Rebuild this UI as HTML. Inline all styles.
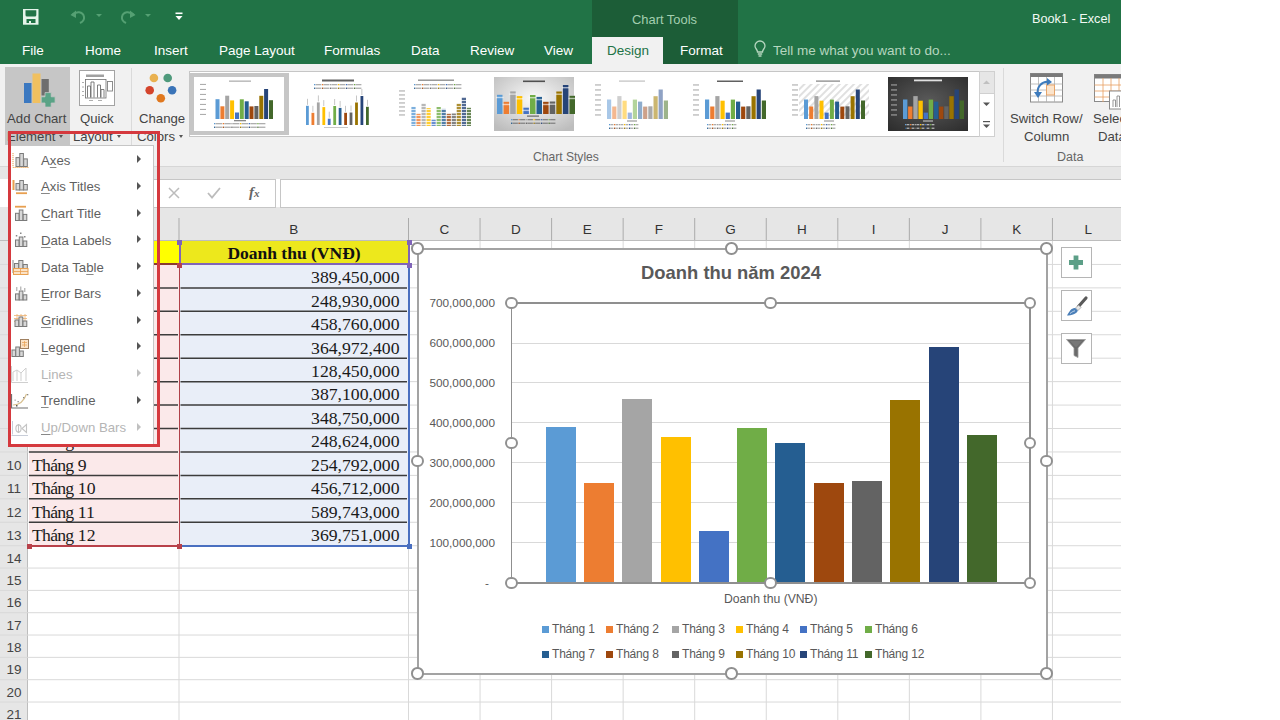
<!DOCTYPE html><html><head><meta charset="utf-8"><style>
*{margin:0;padding:0;box-sizing:border-box}
html,body{width:1280px;height:720px;overflow:hidden;background:#fff;font-family:"Liberation Sans",sans-serif}
.a{position:absolute}
svg{position:absolute;overflow:visible}
#app{position:absolute;left:0;top:0;width:1121px;height:720px;overflow:hidden;background:#fff}
.tab{position:absolute;top:42px;font-size:13.5px;color:#fff;white-space:nowrap;line-height:17px}
.rb{font-size:13.2px;color:#444;white-space:nowrap;position:absolute;line-height:15px}
.ch{position:absolute;top:218px;height:23px;font-size:13.5px;color:#333;text-align:center;line-height:24px}
.rn{position:absolute;left:0;width:28px;font-size:13.5px;color:#444;text-align:center}
.dd{display:inline-block;width:0;height:0;border-left:2.5px solid transparent;border-right:2.5px solid transparent;border-top:3px solid #555;margin-left:4px;vertical-align:3px}
.ser{font-family:"Liberation Serif",serif}
.mi{position:absolute;left:41px;font-size:13.2px;color:#5f5f5f;white-space:nowrap;line-height:16px}
.mi u{text-decoration:underline;text-decoration-thickness:1px;text-underline-offset:2px;text-decoration-color:#888}
.ar{position:absolute;left:137px;width:0;height:0;border-top:4px solid transparent;border-bottom:4px solid transparent;border-left:4px solid #555}
.lg{position:absolute;font-size:12px;letter-spacing:-0.2px;color:#595959;white-space:nowrap;line-height:14px}
.lg i{display:inline-block;width:7px;height:7px;margin-right:3px;vertical-align:0px}
.hd{position:absolute;width:12.5px;height:12.5px;border:2px solid #909090;border-radius:50%;background:#fff}
</style></head><body><div id="app">
<div class="a" style="left:0;top:0;width:1121px;height:64px;background:#217346"></div>
<div class="a" style="left:592px;top:0;width:146px;height:64px;background:#1c5d37"></div>
<div class="a" style="left:592px;top:37px;width:71px;height:27px;background:#f1f1f1"></div>
<div class="a" style="left:632px;top:12px;font-size:12.9px;color:#a3cfb0;line-height:15px">Chart Tools</div>
<div class="a" style="left:1032px;top:10.5px;font-size:12.7px;color:#f2faf4;line-height:17px">Book1 - Excel</div>
<div class="tab" style="left:22px">File</div>
<div class="tab" style="left:85px">Home</div>
<div class="tab" style="left:154px">Insert</div>
<div class="tab" style="left:219px">Page Layout</div>
<div class="tab" style="left:324px">Formulas</div>
<div class="tab" style="left:411px">Data</div>
<div class="tab" style="left:470px">Review</div>
<div class="tab" style="left:544px">View</div>
<div class="tab" style="left:680px">Format</div>
<div class="tab" style="left:607px;color:#217346">Design</div>
<div class="tab" style="left:773px;color:#b5d6bf">Tell me what you want to do...</div>
<svg style="left:22.5px;top:9px" width="16" height="16" viewBox="0 0 16 16"><rect x="0" y="0" width="15.5" height="15.7" fill="#e6f4ea"/><path d="M2.5 1.3H13.3V6.1Q13.3 7.6 11.8 7.6H4Q2.5 7.6 2.5 6.1Z" fill="#217346"/><rect x="3.5" y="10" width="9" height="4" fill="#217346"/><rect x="6" y="12" width="2" height="2" fill="#e6f4ea"/></svg>
<svg style="left:70px;top:9px" width="17" height="15" viewBox="0 0 17 15"><path d="M2 6 C6 2 13 2 14 8 C14.5 11 12 13 10 14" fill="none" stroke="#55a073" stroke-width="2"/><path d="M0.5 6 L6 1.5 L6 9Z" fill="#55a073"/></svg>
<svg style="left:96px;top:14px" width="6" height="4"><path d="M0 0H6L3 3Z" fill="#55a073"/></svg>
<svg style="left:119px;top:9px" width="17" height="15" viewBox="0 0 17 15"><path d="M15 6 C11 2 4 2 3 8 C2.5 11 5 13 7 14" fill="none" stroke="#55a073" stroke-width="2"/><path d="M16.5 6 L11 1.5 L11 9Z" fill="#55a073"/></svg>
<svg style="left:145px;top:14px" width="6" height="4"><path d="M0 0H6L3 3Z" fill="#55a073"/></svg>
<svg style="left:175px;top:12px" width="8" height="9"><rect x="0.5" y="0.5" width="7" height="1.6" fill="#fff"/><path d="M0.5 4H7.5L4 8Z" fill="#fff"/></svg>
<svg style="left:754px;top:41px" width="12" height="17" viewBox="0 0 12 17"><path d="M3.5 11 C3.5 8.5 1 7.5 1 5 A5 5 0 0 1 11 5 C11 7.5 8.5 8.5 8.5 11Z" fill="none" stroke="#b5d6bf" stroke-width="1.3"/><path d="M3.8 13H8.2M4.5 15H7.5" stroke="#b5d6bf" stroke-width="1.3"/></svg>
<div class="a" style="left:0;top:64px;width:1121px;height:103px;background:#f1f1f1"></div>
<div class="a" style="left:0;top:166px;width:1121px;height:1px;background:#d6d6d6"></div>
<div class="a" style="left:0;top:167px;width:1121px;height:12px;background:#e6e6e6"></div>
<div class="a" style="left:0;top:179px;width:1121px;height:29px;background:#fff"></div>
<div class="a" style="left:0;top:207px;width:1121px;height:34px;background:#e6e6e6"></div>
<div class="a" style="left:5px;top:67px;width:65px;height:78px;background:#c6c6c6"></div>
<svg style="left:0;top:64px" width="70" height="45"><rect x="24" y="19" width="7.5" height="20" fill="#3b78c0"/><rect x="32.5" y="9.5" width="8" height="29.5" fill="#f0c060"/><rect x="41.5" y="15" width="7.3" height="16.5" fill="#6e6e6e"/><path d="M45 28.6h6.2v4.2h3.9v6.2h-3.9v4.1h-6.2v-4.1h-3.8v-6.2h3.8z" fill="#5aa386" stroke="#c6c6c6" stroke-width="0.8"/></svg>
<div class="rb" style="left:7px;top:111px">Add Chart</div>
<div class="rb" style="left:7px;top:129px">Element<i class="dd"></i></div>
<svg style="left:79px;top:70px" width="37" height="37"><rect x="0.5" y="0.5" width="35" height="35" fill="#fff" stroke="#a3a3a3"/><rect x="7" y="4.5" width="18" height="2.5" fill="#a0a0a0"/><rect x="6.5" y="9.5" width="20.5" height="18.5" fill="none" stroke="#707070" stroke-width="0.8"/><path d="M8.5 27.5V16H11.5V27.5M12 27.5V12H15V27.5M18.5 27.5V15H21.5V27.5M22 27.5V19.5H25V27.5" fill="none" stroke="#707070" stroke-width="0.9"/><rect x="28.5" y="11.5" width="5" height="9.5" fill="none" stroke="#808080" stroke-width="0.9"/><path d="M3 12.5h2M3 17h2M3 21.5h2M3 25.5h2M10 30.5h4M19 30.5h4" stroke="#9a9a9a" stroke-width="0.8"/></svg>
<div class="rb" style="left:80px;top:111px">Quick</div>
<div class="rb" style="left:73px;top:129px">Layout<i class="dd"></i></div>
<div class="a" style="left:131px;top:68px;width:1px;height:94px;background:#dadada"></div>
<svg style="left:140px;top:64px" width="40" height="40"><circle cx="13.9" cy="14" r="4.3" fill="#e9b150"/><circle cx="27.7" cy="14" r="4.3" fill="#4f9a7c"/><circle cx="9.7" cy="26.2" r="4.3" fill="#d4442c"/><circle cx="32.1" cy="26.2" r="4.3" fill="#3b74b8"/><circle cx="20.8" cy="34.2" r="4.3" fill="#e0781f"/></svg>
<div class="rb" style="left:139px;top:111px">Change</div>
<div class="rb" style="left:137px;top:129px">Colors<i class="dd"></i></div>
<div class="rb" style="left:533px;top:150px;font-size:12.1px;color:#666">Chart Styles</div>
<div class="a" style="left:1003px;top:68px;width:1px;height:94px;background:#dadada"></div>
<div class="a" style="left:189px;top:70.5px;width:791px;height:66px;background:#fff;border:1px solid #c6c6c6"></div>
<div class="a" style="left:189.5px;top:72.8px;width:99px;height:62px;background:#c6c6c6"></div>
<svg style="left:194px;top:77px;filter:blur(0.35px)" width="90" height="54" viewBox="0 0 90 54"><rect width="90" height="54" fill="#fff"/><rect x="35" y="3.5" width="22" height="1.3" fill="#b0b0b0"/><rect x="6" y="6.9" width="6" height="1.1" fill="#8a8a8a" opacity="0.7"/><rect x="6" y="11.9" width="6" height="1.1" fill="#8a8a8a" opacity="0.7"/><rect x="6" y="16.9" width="6" height="1.1" fill="#8a8a8a" opacity="0.7"/><rect x="6" y="21.9" width="6" height="1.1" fill="#8a8a8a" opacity="0.7"/><rect x="6" y="26.9" width="6" height="1.1" fill="#8a8a8a" opacity="0.7"/><rect x="6" y="31.9" width="6" height="1.1" fill="#8a8a8a" opacity="0.7"/><rect x="6" y="36.9" width="6" height="1.1" fill="#8a8a8a" opacity="0.7"/><rect x="21.5" y="22.2" width="4" height="19.8" fill="#5b9bd5"/><rect x="26.4" y="29.3" width="4" height="12.7" fill="#ed7d31"/><rect x="31.2" y="18.7" width="4" height="23.3" fill="#a5a5a5"/><rect x="36.1" y="23.4" width="4" height="18.6" fill="#ffc000"/><rect x="41.0" y="35.5" width="4" height="6.5" fill="#4472c4"/><rect x="45.8" y="22.3" width="4" height="19.7" fill="#70ad47"/><rect x="50.7" y="24.3" width="4" height="17.7" fill="#255e91"/><rect x="55.5" y="29.4" width="4" height="12.6" fill="#9e480e"/><rect x="60.4" y="29.0" width="4" height="13.0" fill="#636363"/><rect x="65.3" y="18.8" width="4" height="23.2" fill="#997300"/><rect x="70.1" y="12.0" width="4" height="30.0" fill="#264478"/><rect x="75.0" y="23.2" width="4" height="18.8" fill="#43682b"/><rect x="40" y="43" width="12" height="1.3" fill="#888"/><rect x="20.0" y="46.0" width="1.3" height="1.3" fill="#5b9bd5"/><rect x="21.6" y="46.0" width="6.5" height="1.3" fill="#9a9a9a" opacity="0.8"/><rect x="28.7" y="46.0" width="1.3" height="1.3" fill="#ed7d31"/><rect x="30.3" y="46.0" width="6.5" height="1.3" fill="#9a9a9a" opacity="0.8"/><rect x="37.3" y="46.0" width="1.3" height="1.3" fill="#a5a5a5"/><rect x="38.9" y="46.0" width="6.5" height="1.3" fill="#9a9a9a" opacity="0.8"/><rect x="46.0" y="46.0" width="1.3" height="1.3" fill="#ffc000"/><rect x="47.6" y="46.0" width="6.5" height="1.3" fill="#9a9a9a" opacity="0.8"/><rect x="54.7" y="46.0" width="1.3" height="1.3" fill="#4472c4"/><rect x="56.3" y="46.0" width="6.5" height="1.3" fill="#9a9a9a" opacity="0.8"/><rect x="63.3" y="46.0" width="1.3" height="1.3" fill="#70ad47"/><rect x="64.9" y="46.0" width="6.5" height="1.3" fill="#9a9a9a" opacity="0.8"/><rect x="20.0" y="49.6" width="1.3" height="1.3" fill="#255e91"/><rect x="21.6" y="49.6" width="6.5" height="1.3" fill="#9a9a9a" opacity="0.8"/><rect x="28.7" y="49.6" width="1.3" height="1.3" fill="#9e480e"/><rect x="30.3" y="49.6" width="6.5" height="1.3" fill="#9a9a9a" opacity="0.8"/><rect x="37.3" y="49.6" width="1.3" height="1.3" fill="#636363"/><rect x="38.9" y="49.6" width="6.5" height="1.3" fill="#9a9a9a" opacity="0.8"/><rect x="46.0" y="49.6" width="1.3" height="1.3" fill="#997300"/><rect x="47.6" y="49.6" width="6.5" height="1.3" fill="#9a9a9a" opacity="0.8"/><rect x="54.7" y="49.6" width="1.3" height="1.3" fill="#264478"/><rect x="56.3" y="49.6" width="6.5" height="1.3" fill="#9a9a9a" opacity="0.8"/><rect x="63.3" y="49.6" width="1.3" height="1.3" fill="#43682b"/><rect x="64.9" y="49.6" width="6.5" height="1.3" fill="#9a9a9a" opacity="0.8"/></svg>
<svg style="left:297.6px;top:77px;filter:blur(0.35px)" width="80" height="54" viewBox="0 0 80 54"><rect width="80" height="54" fill="#fff"/><rect x="24" y="2.5" width="32" height="2" fill="#606060"/><rect x="16.0" y="7.0" width="1.3" height="1.3" fill="#5b9bd5"/><rect x="17.6" y="7.0" width="5.8" height="1.3" fill="#9a9a9a" opacity="0.8"/><rect x="24.0" y="7.0" width="1.3" height="1.3" fill="#ed7d31"/><rect x="25.6" y="7.0" width="5.8" height="1.3" fill="#9a9a9a" opacity="0.8"/><rect x="32.0" y="7.0" width="1.3" height="1.3" fill="#a5a5a5"/><rect x="33.6" y="7.0" width="5.8" height="1.3" fill="#9a9a9a" opacity="0.8"/><rect x="40.0" y="7.0" width="1.3" height="1.3" fill="#ffc000"/><rect x="41.6" y="7.0" width="5.8" height="1.3" fill="#9a9a9a" opacity="0.8"/><rect x="48.0" y="7.0" width="1.3" height="1.3" fill="#4472c4"/><rect x="49.6" y="7.0" width="5.8" height="1.3" fill="#9a9a9a" opacity="0.8"/><rect x="56.0" y="7.0" width="1.3" height="1.3" fill="#70ad47"/><rect x="57.6" y="7.0" width="5.8" height="1.3" fill="#9a9a9a" opacity="0.8"/><rect x="16.0" y="10.6" width="1.3" height="1.3" fill="#255e91"/><rect x="17.6" y="10.6" width="5.8" height="1.3" fill="#9a9a9a" opacity="0.8"/><rect x="24.0" y="10.6" width="1.3" height="1.3" fill="#9e480e"/><rect x="25.6" y="10.6" width="5.8" height="1.3" fill="#9a9a9a" opacity="0.8"/><rect x="32.0" y="10.6" width="1.3" height="1.3" fill="#636363"/><rect x="33.6" y="10.6" width="5.8" height="1.3" fill="#9a9a9a" opacity="0.8"/><rect x="40.0" y="10.6" width="1.3" height="1.3" fill="#997300"/><rect x="41.6" y="10.6" width="5.8" height="1.3" fill="#9a9a9a" opacity="0.8"/><rect x="48.0" y="10.6" width="1.3" height="1.3" fill="#264478"/><rect x="49.6" y="10.6" width="5.8" height="1.3" fill="#9a9a9a" opacity="0.8"/><rect x="56.0" y="10.6" width="1.3" height="1.3" fill="#43682b"/><rect x="57.6" y="10.6" width="5.8" height="1.3" fill="#9a9a9a" opacity="0.8"/><rect x="8.0" y="28.8" width="2.8" height="19.2" fill="#5b9bd5"/><rect x="9.0" y="21.8" width="0.8" height="6" fill="#b8b8b8"/><rect x="13.5" y="35.8" width="2.8" height="12.2" fill="#ed7d31"/><rect x="14.5" y="28.8" width="0.8" height="6" fill="#b8b8b8"/><rect x="18.9" y="25.4" width="2.8" height="22.6" fill="#a5a5a5"/><rect x="19.9" y="18.4" width="0.8" height="6" fill="#b8b8b8"/><rect x="24.4" y="30.1" width="2.8" height="17.9" fill="#ffc000"/><rect x="25.4" y="23.1" width="0.8" height="6" fill="#b8b8b8"/><rect x="29.8" y="41.7" width="2.8" height="6.3" fill="#4472c4"/><rect x="30.8" y="34.7" width="0.8" height="6" fill="#b8b8b8"/><rect x="35.3" y="29.0" width="2.8" height="19.0" fill="#70ad47"/><rect x="36.3" y="22.0" width="0.8" height="6" fill="#b8b8b8"/><rect x="40.7" y="30.9" width="2.8" height="17.1" fill="#255e91"/><rect x="41.7" y="23.9" width="0.8" height="6" fill="#b8b8b8"/><rect x="46.2" y="35.8" width="2.8" height="12.2" fill="#9e480e"/><rect x="47.2" y="28.8" width="0.8" height="6" fill="#b8b8b8"/><rect x="51.6" y="35.5" width="2.8" height="12.5" fill="#636363"/><rect x="52.6" y="28.5" width="0.8" height="6" fill="#b8b8b8"/><rect x="57.1" y="25.5" width="2.8" height="22.5" fill="#997300"/><rect x="58.1" y="18.5" width="0.8" height="6" fill="#b8b8b8"/><rect x="62.5" y="19.0" width="2.8" height="29.0" fill="#264478"/><rect x="63.5" y="12.0" width="0.8" height="6" fill="#b8b8b8"/><rect x="68.0" y="29.8" width="2.8" height="18.2" fill="#43682b"/><rect x="69.0" y="22.8" width="0.8" height="6" fill="#b8b8b8"/><rect x="26" y="50" width="24" height="1" fill="#c8c8c8"/></svg>
<svg style="left:395.6px;top:77px;filter:blur(0.35px)" width="80" height="54" viewBox="0 0 80 54"><rect width="80" height="54" fill="#fff"/><rect x="22" y="2.5" width="36" height="1.4" fill="#909090"/><rect x="18.0" y="7.0" width="1.3" height="1.3" fill="#5b9bd5"/><rect x="19.6" y="7.0" width="5.8" height="1.3" fill="#9a9a9a" opacity="0.8"/><rect x="26.0" y="7.0" width="1.3" height="1.3" fill="#ed7d31"/><rect x="27.6" y="7.0" width="5.8" height="1.3" fill="#9a9a9a" opacity="0.8"/><rect x="34.0" y="7.0" width="1.3" height="1.3" fill="#a5a5a5"/><rect x="35.6" y="7.0" width="5.8" height="1.3" fill="#9a9a9a" opacity="0.8"/><rect x="42.0" y="7.0" width="1.3" height="1.3" fill="#ffc000"/><rect x="43.6" y="7.0" width="5.8" height="1.3" fill="#9a9a9a" opacity="0.8"/><rect x="50.0" y="7.0" width="1.3" height="1.3" fill="#4472c4"/><rect x="51.6" y="7.0" width="5.8" height="1.3" fill="#9a9a9a" opacity="0.8"/><rect x="58.0" y="7.0" width="1.3" height="1.3" fill="#70ad47"/><rect x="59.6" y="7.0" width="5.8" height="1.3" fill="#9a9a9a" opacity="0.8"/><rect x="18.0" y="10.6" width="1.3" height="1.3" fill="#255e91"/><rect x="19.6" y="10.6" width="5.8" height="1.3" fill="#9a9a9a" opacity="0.8"/><rect x="26.0" y="10.6" width="1.3" height="1.3" fill="#9e480e"/><rect x="27.6" y="10.6" width="5.8" height="1.3" fill="#9a9a9a" opacity="0.8"/><rect x="34.0" y="10.6" width="1.3" height="1.3" fill="#636363"/><rect x="35.6" y="10.6" width="5.8" height="1.3" fill="#9a9a9a" opacity="0.8"/><rect x="42.0" y="10.6" width="1.3" height="1.3" fill="#997300"/><rect x="43.6" y="10.6" width="5.8" height="1.3" fill="#9a9a9a" opacity="0.8"/><rect x="50.0" y="10.6" width="1.3" height="1.3" fill="#264478"/><rect x="51.6" y="10.6" width="5.8" height="1.3" fill="#9a9a9a" opacity="0.8"/><rect x="58.0" y="10.6" width="1.3" height="1.3" fill="#43682b"/><rect x="59.6" y="10.6" width="5.8" height="1.3" fill="#9a9a9a" opacity="0.8"/><rect x="3" y="13.4" width="6" height="1.1" fill="#8a8a8a" opacity="0.7"/><rect x="3" y="17.4" width="6" height="1.1" fill="#8a8a8a" opacity="0.7"/><rect x="3" y="21.4" width="6" height="1.1" fill="#8a8a8a" opacity="0.7"/><rect x="3" y="25.4" width="6" height="1.1" fill="#8a8a8a" opacity="0.7"/><rect x="3" y="29.4" width="6" height="1.1" fill="#8a8a8a" opacity="0.7"/><rect x="3" y="33.4" width="6" height="1.1" fill="#8a8a8a" opacity="0.7"/><rect x="3" y="37.4" width="6" height="1.1" fill="#8a8a8a" opacity="0.7"/><rect x="15.4" y="29.8" width="4.2" height="19.2" fill="#5b9bd5" opacity="0.8"/><rect x="20.4" y="36.8" width="4.2" height="12.2" fill="#ed7d31" opacity="0.8"/><rect x="25.5" y="26.4" width="4.2" height="22.6" fill="#a5a5a5" opacity="0.8"/><rect x="30.5" y="31.1" width="4.2" height="17.9" fill="#ffc000" opacity="0.8"/><rect x="35.5" y="42.7" width="4.2" height="6.3" fill="#4472c4" opacity="0.8"/><rect x="40.6" y="30.0" width="4.2" height="19.0" fill="#70ad47" opacity="0.8"/><rect x="45.6" y="31.9" width="4.2" height="17.1" fill="#255e91" opacity="0.8"/><rect x="50.7" y="36.8" width="4.2" height="12.2" fill="#9e480e" opacity="0.8"/><rect x="55.7" y="36.5" width="4.2" height="12.5" fill="#636363" opacity="0.8"/><rect x="60.7" y="26.5" width="4.2" height="22.5" fill="#997300" opacity="0.8"/><rect x="65.8" y="20.0" width="4.2" height="29.0" fill="#264478" opacity="0.8"/><rect x="70.8" y="30.8" width="4.2" height="18.2" fill="#43682b" opacity="0.8"/><rect x="12" y="14" width="68" height="1" fill="#fff" opacity="0.75"/><rect x="12" y="17" width="68" height="1" fill="#fff" opacity="0.75"/><rect x="12" y="20" width="68" height="1" fill="#fff" opacity="0.75"/><rect x="12" y="23" width="68" height="1" fill="#fff" opacity="0.75"/><rect x="12" y="26" width="68" height="1" fill="#fff" opacity="0.75"/><rect x="12" y="29" width="68" height="1" fill="#fff" opacity="0.75"/><rect x="12" y="32" width="68" height="1" fill="#fff" opacity="0.75"/><rect x="12" y="35" width="68" height="1" fill="#fff" opacity="0.75"/><rect x="12" y="38" width="68" height="1" fill="#fff" opacity="0.75"/><rect x="12" y="41" width="68" height="1" fill="#fff" opacity="0.75"/><rect x="12" y="44" width="68" height="1" fill="#fff" opacity="0.75"/><rect x="12" y="47" width="68" height="1" fill="#fff" opacity="0.75"/></svg>
<svg style="left:494.3px;top:77px;filter:blur(0.35px)" width="80" height="54" viewBox="0 0 80 54"><defs><radialGradient id="g4" cx="0.5" cy="0.4" r="0.7"><stop offset="0" stop-color="#fafafa"/><stop offset="1" stop-color="#bdbdbd"/></radialGradient></defs><rect width="80" height="54" fill="url(#g4)"/><rect x="29" y="3.5" width="22" height="1.6" fill="#505050"/><rect x="3.0" y="17.8" width="5.5" height="19.2" fill="#5b9bd5"/><rect x="2.0" y="19.8" width="7.5" height="1.4" fill="#fff" opacity="0.6"/><rect x="9.6" y="24.8" width="5.5" height="12.2" fill="#ed7d31"/><rect x="8.6" y="26.8" width="7.5" height="1.4" fill="#fff" opacity="0.6"/><rect x="16.2" y="14.4" width="5.5" height="22.6" fill="#a5a5a5"/><rect x="15.2" y="16.4" width="7.5" height="1.4" fill="#fff" opacity="0.6"/><rect x="22.8" y="19.1" width="5.5" height="17.9" fill="#ffc000"/><rect x="21.8" y="21.1" width="7.5" height="1.4" fill="#fff" opacity="0.6"/><rect x="29.4" y="30.7" width="5.5" height="6.3" fill="#4472c4"/><rect x="28.4" y="32.7" width="7.5" height="1.4" fill="#fff" opacity="0.6"/><rect x="36.0" y="18.0" width="5.5" height="19.0" fill="#70ad47"/><rect x="35.0" y="20.0" width="7.5" height="1.4" fill="#fff" opacity="0.6"/><rect x="42.5" y="19.9" width="5.5" height="17.1" fill="#255e91"/><rect x="41.5" y="21.9" width="7.5" height="1.4" fill="#fff" opacity="0.6"/><rect x="49.1" y="24.8" width="5.5" height="12.2" fill="#9e480e"/><rect x="48.1" y="26.8" width="7.5" height="1.4" fill="#fff" opacity="0.6"/><rect x="55.7" y="24.5" width="5.5" height="12.5" fill="#636363"/><rect x="54.7" y="26.5" width="7.5" height="1.4" fill="#fff" opacity="0.6"/><rect x="62.3" y="14.5" width="5.5" height="22.5" fill="#997300"/><rect x="61.3" y="16.5" width="7.5" height="1.4" fill="#fff" opacity="0.6"/><rect x="68.9" y="8.0" width="5.5" height="29.0" fill="#264478"/><rect x="67.9" y="10.0" width="7.5" height="1.4" fill="#fff" opacity="0.6"/><rect x="75.5" y="18.8" width="5.5" height="18.2" fill="#43682b"/><rect x="74.5" y="20.8" width="7.5" height="1.4" fill="#fff" opacity="0.6"/><rect x="33" y="38.5" width="12" height="1.2" fill="#666"/><rect x="17.0" y="42.0" width="1.3" height="1.3" fill="#5b9bd5"/><rect x="18.6" y="42.0" width="5.3" height="1.3" fill="#707070" opacity="0.8"/><rect x="24.5" y="42.0" width="1.3" height="1.3" fill="#ed7d31"/><rect x="26.1" y="42.0" width="5.3" height="1.3" fill="#707070" opacity="0.8"/><rect x="32.0" y="42.0" width="1.3" height="1.3" fill="#a5a5a5"/><rect x="33.6" y="42.0" width="5.3" height="1.3" fill="#707070" opacity="0.8"/><rect x="39.5" y="42.0" width="1.3" height="1.3" fill="#ffc000"/><rect x="41.1" y="42.0" width="5.3" height="1.3" fill="#707070" opacity="0.8"/><rect x="47.0" y="42.0" width="1.3" height="1.3" fill="#4472c4"/><rect x="48.6" y="42.0" width="5.3" height="1.3" fill="#707070" opacity="0.8"/><rect x="54.5" y="42.0" width="1.3" height="1.3" fill="#70ad47"/><rect x="56.1" y="42.0" width="5.3" height="1.3" fill="#707070" opacity="0.8"/><rect x="17.0" y="45.6" width="1.3" height="1.3" fill="#255e91"/><rect x="18.6" y="45.6" width="5.3" height="1.3" fill="#707070" opacity="0.8"/><rect x="24.5" y="45.6" width="1.3" height="1.3" fill="#9e480e"/><rect x="26.1" y="45.6" width="5.3" height="1.3" fill="#707070" opacity="0.8"/><rect x="32.0" y="45.6" width="1.3" height="1.3" fill="#636363"/><rect x="33.6" y="45.6" width="5.3" height="1.3" fill="#707070" opacity="0.8"/><rect x="39.5" y="45.6" width="1.3" height="1.3" fill="#997300"/><rect x="41.1" y="45.6" width="5.3" height="1.3" fill="#707070" opacity="0.8"/><rect x="47.0" y="45.6" width="1.3" height="1.3" fill="#264478"/><rect x="48.6" y="45.6" width="5.3" height="1.3" fill="#707070" opacity="0.8"/><rect x="54.5" y="45.6" width="1.3" height="1.3" fill="#43682b"/><rect x="56.1" y="45.6" width="5.3" height="1.3" fill="#707070" opacity="0.8"/></svg>
<svg style="left:592.4px;top:77px;filter:blur(0.35px)" width="80" height="54" viewBox="0 0 80 54"><rect width="80" height="54" fill="#fff"/><rect x="27" y="3.5" width="26" height="1.2" fill="#c0c0c0"/><rect x="3" y="7.4" width="6" height="1.1" fill="#8a8a8a" opacity="0.7"/><rect x="3" y="12.4" width="6" height="1.1" fill="#8a8a8a" opacity="0.7"/><rect x="3" y="17.4" width="6" height="1.1" fill="#8a8a8a" opacity="0.7"/><rect x="3" y="22.4" width="6" height="1.1" fill="#8a8a8a" opacity="0.7"/><rect x="3" y="27.4" width="6" height="1.1" fill="#8a8a8a" opacity="0.7"/><rect x="3" y="32.4" width="6" height="1.1" fill="#8a8a8a" opacity="0.7"/><rect x="3" y="37.4" width="6" height="1.1" fill="#8a8a8a" opacity="0.7"/><rect x="15.0" y="22.5" width="4.2" height="19.5" fill="#a9c8e8"/><rect x="20.2" y="29.5" width="4.2" height="12.5" fill="#f4b890"/><rect x="25.3" y="19.1" width="4.2" height="22.9" fill="#cfcfcf"/><rect x="30.5" y="23.7" width="4.2" height="18.3" fill="#ffdc80"/><rect x="35.7" y="35.6" width="4.2" height="6.4" fill="#9fb6e0"/><rect x="40.8" y="22.6" width="4.2" height="19.4" fill="#b3d49b"/><rect x="46.0" y="24.6" width="4.2" height="17.4" fill="#8eaccc"/><rect x="51.1" y="29.6" width="4.2" height="12.4" fill="#cda18a"/><rect x="56.3" y="29.3" width="4.2" height="12.7" fill="#aaaaaa"/><rect x="61.5" y="19.2" width="4.2" height="22.8" fill="#cbb670"/><rect x="66.6" y="12.5" width="4.2" height="29.5" fill="#8fa2c4"/><rect x="71.8" y="23.5" width="4.2" height="18.5" fill="#9db48b"/><rect x="35" y="43.5" width="10" height="1" fill="#888"/><rect x="17.0" y="47.0" width="1.3" height="1.3" fill="#5b9bd5"/><rect x="18.6" y="47.0" width="2.8" height="1.3" fill="#9a9a9a" opacity="0.8"/><rect x="22.0" y="47.0" width="1.3" height="1.3" fill="#ed7d31"/><rect x="23.6" y="47.0" width="2.8" height="1.3" fill="#9a9a9a" opacity="0.8"/><rect x="27.0" y="47.0" width="1.3" height="1.3" fill="#a5a5a5"/><rect x="28.6" y="47.0" width="2.8" height="1.3" fill="#9a9a9a" opacity="0.8"/><rect x="32.0" y="47.0" width="1.3" height="1.3" fill="#ffc000"/><rect x="33.6" y="47.0" width="2.8" height="1.3" fill="#9a9a9a" opacity="0.8"/><rect x="37.0" y="47.0" width="1.3" height="1.3" fill="#4472c4"/><rect x="38.6" y="47.0" width="2.8" height="1.3" fill="#9a9a9a" opacity="0.8"/><rect x="42.0" y="47.0" width="1.3" height="1.3" fill="#70ad47"/><rect x="43.6" y="47.0" width="2.8" height="1.3" fill="#9a9a9a" opacity="0.8"/><rect x="17.0" y="50.6" width="1.3" height="1.3" fill="#255e91"/><rect x="18.6" y="50.6" width="2.8" height="1.3" fill="#9a9a9a" opacity="0.8"/><rect x="22.0" y="50.6" width="1.3" height="1.3" fill="#9e480e"/><rect x="23.6" y="50.6" width="2.8" height="1.3" fill="#9a9a9a" opacity="0.8"/><rect x="27.0" y="50.6" width="1.3" height="1.3" fill="#636363"/><rect x="28.6" y="50.6" width="2.8" height="1.3" fill="#9a9a9a" opacity="0.8"/><rect x="32.0" y="50.6" width="1.3" height="1.3" fill="#997300"/><rect x="33.6" y="50.6" width="2.8" height="1.3" fill="#9a9a9a" opacity="0.8"/><rect x="37.0" y="50.6" width="1.3" height="1.3" fill="#264478"/><rect x="38.6" y="50.6" width="2.8" height="1.3" fill="#9a9a9a" opacity="0.8"/><rect x="42.0" y="50.6" width="1.3" height="1.3" fill="#43682b"/><rect x="43.6" y="50.6" width="2.8" height="1.3" fill="#9a9a9a" opacity="0.8"/></svg>
<svg style="left:690.4px;top:77px;filter:blur(0.35px)" width="80" height="54" viewBox="0 0 80 54"><rect width="80" height="54" fill="#fff"/><rect x="27" y="3.5" width="26" height="1.5" fill="#606060"/><rect x="3" y="7.4" width="6" height="1.1" fill="#8a8a8a" opacity="0.7"/><rect x="3" y="12.4" width="6" height="1.1" fill="#8a8a8a" opacity="0.7"/><rect x="3" y="17.4" width="6" height="1.1" fill="#8a8a8a" opacity="0.7"/><rect x="3" y="22.4" width="6" height="1.1" fill="#8a8a8a" opacity="0.7"/><rect x="3" y="27.4" width="6" height="1.1" fill="#8a8a8a" opacity="0.7"/><rect x="3" y="32.4" width="6" height="1.1" fill="#8a8a8a" opacity="0.7"/><rect x="3" y="37.4" width="6" height="1.1" fill="#8a8a8a" opacity="0.7"/><rect x="15.0" y="22.5" width="4.2" height="19.5" fill="#5b9bd5"/><rect x="20.2" y="29.5" width="4.2" height="12.5" fill="#ed7d31"/><rect x="25.3" y="19.1" width="4.2" height="22.9" fill="#a5a5a5"/><rect x="30.5" y="23.7" width="4.2" height="18.3" fill="#ffc000"/><rect x="35.7" y="35.6" width="4.2" height="6.4" fill="#4472c4"/><rect x="40.8" y="22.6" width="4.2" height="19.4" fill="#70ad47"/><rect x="46.0" y="24.6" width="4.2" height="17.4" fill="#255e91"/><rect x="51.1" y="29.6" width="4.2" height="12.4" fill="#9e480e"/><rect x="56.3" y="29.3" width="4.2" height="12.7" fill="#636363"/><rect x="61.5" y="19.2" width="4.2" height="22.8" fill="#997300"/><rect x="66.6" y="12.5" width="4.2" height="29.5" fill="#264478"/><rect x="71.8" y="23.5" width="4.2" height="18.5" fill="#43682b"/><rect x="35" y="43.5" width="10" height="1" fill="#888"/><rect x="17.0" y="47.0" width="1.3" height="1.3" fill="#5b9bd5"/><rect x="18.6" y="47.0" width="2.8" height="1.3" fill="#9a9a9a" opacity="0.8"/><rect x="22.0" y="47.0" width="1.3" height="1.3" fill="#ed7d31"/><rect x="23.6" y="47.0" width="2.8" height="1.3" fill="#9a9a9a" opacity="0.8"/><rect x="27.0" y="47.0" width="1.3" height="1.3" fill="#a5a5a5"/><rect x="28.6" y="47.0" width="2.8" height="1.3" fill="#9a9a9a" opacity="0.8"/><rect x="32.0" y="47.0" width="1.3" height="1.3" fill="#ffc000"/><rect x="33.6" y="47.0" width="2.8" height="1.3" fill="#9a9a9a" opacity="0.8"/><rect x="37.0" y="47.0" width="1.3" height="1.3" fill="#4472c4"/><rect x="38.6" y="47.0" width="2.8" height="1.3" fill="#9a9a9a" opacity="0.8"/><rect x="42.0" y="47.0" width="1.3" height="1.3" fill="#70ad47"/><rect x="43.6" y="47.0" width="2.8" height="1.3" fill="#9a9a9a" opacity="0.8"/><rect x="17.0" y="50.6" width="1.3" height="1.3" fill="#255e91"/><rect x="18.6" y="50.6" width="2.8" height="1.3" fill="#9a9a9a" opacity="0.8"/><rect x="22.0" y="50.6" width="1.3" height="1.3" fill="#9e480e"/><rect x="23.6" y="50.6" width="2.8" height="1.3" fill="#9a9a9a" opacity="0.8"/><rect x="27.0" y="50.6" width="1.3" height="1.3" fill="#636363"/><rect x="28.6" y="50.6" width="2.8" height="1.3" fill="#9a9a9a" opacity="0.8"/><rect x="32.0" y="50.6" width="1.3" height="1.3" fill="#997300"/><rect x="33.6" y="50.6" width="2.8" height="1.3" fill="#9a9a9a" opacity="0.8"/><rect x="37.0" y="50.6" width="1.3" height="1.3" fill="#264478"/><rect x="38.6" y="50.6" width="2.8" height="1.3" fill="#9a9a9a" opacity="0.8"/><rect x="42.0" y="50.6" width="1.3" height="1.3" fill="#43682b"/><rect x="43.6" y="50.6" width="2.8" height="1.3" fill="#9a9a9a" opacity="0.8"/></svg>
<svg style="left:788.5px;top:77px;filter:blur(0.35px)" width="80" height="54" viewBox="0 0 80 54"><rect width="80" height="54" fill="#fff"/><defs><pattern id="p7" width="5" height="5" patternUnits="userSpaceOnUse" patternTransform="rotate(45)"><rect width="2" height="5" fill="#e0e0e0"/></pattern></defs><rect x="10" y="7" width="70" height="32" fill="url(#p7)"/><rect x="27" y="3.5" width="24" height="1.2" fill="#808080"/><rect x="3" y="7.4" width="6" height="1.1" fill="#8a8a8a" opacity="0.7"/><rect x="3" y="12.4" width="6" height="1.1" fill="#8a8a8a" opacity="0.7"/><rect x="3" y="17.4" width="6" height="1.1" fill="#8a8a8a" opacity="0.7"/><rect x="3" y="22.4" width="6" height="1.1" fill="#8a8a8a" opacity="0.7"/><rect x="3" y="27.4" width="6" height="1.1" fill="#8a8a8a" opacity="0.7"/><rect x="3" y="32.4" width="6" height="1.1" fill="#8a8a8a" opacity="0.7"/><rect x="3" y="37.4" width="6" height="1.1" fill="#8a8a8a" opacity="0.7"/><rect x="15.0" y="22.5" width="4" height="19.5" fill="#5b9bd5"/><rect x="20.2" y="29.5" width="4" height="12.5" fill="#ed7d31"/><rect x="25.4" y="19.1" width="4" height="22.9" fill="#a5a5a5"/><rect x="30.5" y="23.7" width="4" height="18.3" fill="#ffc000"/><rect x="35.7" y="35.6" width="4" height="6.4" fill="#4472c4"/><rect x="40.9" y="22.6" width="4" height="19.4" fill="#70ad47"/><rect x="46.1" y="24.6" width="4" height="17.4" fill="#255e91"/><rect x="51.3" y="29.6" width="4" height="12.4" fill="#9e480e"/><rect x="56.5" y="29.3" width="4" height="12.7" fill="#636363"/><rect x="61.6" y="19.2" width="4" height="22.8" fill="#997300"/><rect x="66.8" y="12.5" width="4" height="29.5" fill="#264478"/><rect x="72.0" y="23.5" width="4" height="18.5" fill="#43682b"/><rect x="35" y="43.5" width="10" height="1" fill="#888"/><rect x="17.0" y="47.0" width="1.3" height="1.3" fill="#5b9bd5"/><rect x="18.6" y="47.0" width="2.8" height="1.3" fill="#9a9a9a" opacity="0.8"/><rect x="22.0" y="47.0" width="1.3" height="1.3" fill="#ed7d31"/><rect x="23.6" y="47.0" width="2.8" height="1.3" fill="#9a9a9a" opacity="0.8"/><rect x="27.0" y="47.0" width="1.3" height="1.3" fill="#a5a5a5"/><rect x="28.6" y="47.0" width="2.8" height="1.3" fill="#9a9a9a" opacity="0.8"/><rect x="32.0" y="47.0" width="1.3" height="1.3" fill="#ffc000"/><rect x="33.6" y="47.0" width="2.8" height="1.3" fill="#9a9a9a" opacity="0.8"/><rect x="37.0" y="47.0" width="1.3" height="1.3" fill="#4472c4"/><rect x="38.6" y="47.0" width="2.8" height="1.3" fill="#9a9a9a" opacity="0.8"/><rect x="42.0" y="47.0" width="1.3" height="1.3" fill="#70ad47"/><rect x="43.6" y="47.0" width="2.8" height="1.3" fill="#9a9a9a" opacity="0.8"/><rect x="17.0" y="50.6" width="1.3" height="1.3" fill="#255e91"/><rect x="18.6" y="50.6" width="2.8" height="1.3" fill="#9a9a9a" opacity="0.8"/><rect x="22.0" y="50.6" width="1.3" height="1.3" fill="#9e480e"/><rect x="23.6" y="50.6" width="2.8" height="1.3" fill="#9a9a9a" opacity="0.8"/><rect x="27.0" y="50.6" width="1.3" height="1.3" fill="#636363"/><rect x="28.6" y="50.6" width="2.8" height="1.3" fill="#9a9a9a" opacity="0.8"/><rect x="32.0" y="50.6" width="1.3" height="1.3" fill="#997300"/><rect x="33.6" y="50.6" width="2.8" height="1.3" fill="#9a9a9a" opacity="0.8"/><rect x="37.0" y="50.6" width="1.3" height="1.3" fill="#264478"/><rect x="38.6" y="50.6" width="2.8" height="1.3" fill="#9a9a9a" opacity="0.8"/><rect x="42.0" y="50.6" width="1.3" height="1.3" fill="#43682b"/><rect x="43.6" y="50.6" width="2.8" height="1.3" fill="#9a9a9a" opacity="0.8"/></svg>
<svg style="left:887.5px;top:77px;filter:blur(0.35px)" width="80" height="54" viewBox="0 0 80 54"><defs><radialGradient id="g8" cx="0.5" cy="0.45" r="0.7"><stop offset="0" stop-color="#5a5a5a"/><stop offset="1" stop-color="#2e2e2e"/></radialGradient></defs><rect width="80" height="54" fill="url(#g8)"/><rect x="26" y="2.5" width="28" height="1.8" fill="#e0e0e0"/><rect x="3" y="7.4" width="6" height="1.1" fill="#d0d0d0" opacity="0.7"/><rect x="3" y="12.4" width="6" height="1.1" fill="#d0d0d0" opacity="0.7"/><rect x="3" y="17.4" width="6" height="1.1" fill="#d0d0d0" opacity="0.7"/><rect x="3" y="22.4" width="6" height="1.1" fill="#d0d0d0" opacity="0.7"/><rect x="3" y="27.4" width="6" height="1.1" fill="#d0d0d0" opacity="0.7"/><rect x="3" y="32.4" width="6" height="1.1" fill="#d0d0d0" opacity="0.7"/><rect x="3" y="37.4" width="6" height="1.1" fill="#d0d0d0" opacity="0.7"/><rect x="15.0" y="22.5" width="4.4" height="19.5" fill="#5b9bd5"/><rect x="20.1" y="29.5" width="4.4" height="12.5" fill="#ed7d31"/><rect x="25.3" y="19.1" width="4.4" height="22.9" fill="#a5a5a5"/><rect x="30.4" y="23.7" width="4.4" height="18.3" fill="#ffc000"/><rect x="35.6" y="35.6" width="4.4" height="6.4" fill="#4472c4"/><rect x="40.7" y="22.6" width="4.4" height="19.4" fill="#70ad47"/><rect x="45.9" y="24.6" width="4.4" height="17.4" fill="#255e91"/><rect x="51.0" y="29.6" width="4.4" height="12.4" fill="#9e480e"/><rect x="56.2" y="29.3" width="4.4" height="12.7" fill="#636363"/><rect x="61.3" y="19.2" width="4.4" height="22.8" fill="#997300"/><rect x="66.5" y="12.5" width="4.4" height="29.5" fill="#264478"/><rect x="71.6" y="23.5" width="4.4" height="18.5" fill="#43682b"/><rect x="35" y="43.5" width="10" height="1" fill="#d0d0d0"/><rect x="17.0" y="47.0" width="1.3" height="1.3" fill="#5b9bd5"/><rect x="18.6" y="47.0" width="2.8" height="1.3" fill="#d0d0d0" opacity="0.8"/><rect x="22.0" y="47.0" width="1.3" height="1.3" fill="#ed7d31"/><rect x="23.6" y="47.0" width="2.8" height="1.3" fill="#d0d0d0" opacity="0.8"/><rect x="27.0" y="47.0" width="1.3" height="1.3" fill="#a5a5a5"/><rect x="28.6" y="47.0" width="2.8" height="1.3" fill="#d0d0d0" opacity="0.8"/><rect x="32.0" y="47.0" width="1.3" height="1.3" fill="#ffc000"/><rect x="33.6" y="47.0" width="2.8" height="1.3" fill="#d0d0d0" opacity="0.8"/><rect x="37.0" y="47.0" width="1.3" height="1.3" fill="#4472c4"/><rect x="38.6" y="47.0" width="2.8" height="1.3" fill="#d0d0d0" opacity="0.8"/><rect x="42.0" y="47.0" width="1.3" height="1.3" fill="#70ad47"/><rect x="43.6" y="47.0" width="2.8" height="1.3" fill="#d0d0d0" opacity="0.8"/><rect x="17.0" y="50.6" width="1.3" height="1.3" fill="#255e91"/><rect x="18.6" y="50.6" width="2.8" height="1.3" fill="#d0d0d0" opacity="0.8"/><rect x="22.0" y="50.6" width="1.3" height="1.3" fill="#9e480e"/><rect x="23.6" y="50.6" width="2.8" height="1.3" fill="#d0d0d0" opacity="0.8"/><rect x="27.0" y="50.6" width="1.3" height="1.3" fill="#636363"/><rect x="28.6" y="50.6" width="2.8" height="1.3" fill="#d0d0d0" opacity="0.8"/><rect x="32.0" y="50.6" width="1.3" height="1.3" fill="#997300"/><rect x="33.6" y="50.6" width="2.8" height="1.3" fill="#d0d0d0" opacity="0.8"/><rect x="37.0" y="50.6" width="1.3" height="1.3" fill="#264478"/><rect x="38.6" y="50.6" width="2.8" height="1.3" fill="#d0d0d0" opacity="0.8"/><rect x="42.0" y="50.6" width="1.3" height="1.3" fill="#43682b"/><rect x="43.6" y="50.6" width="2.8" height="1.3" fill="#d0d0d0" opacity="0.8"/></svg>
<div class="a" style="left:978.5px;top:71px;width:16px;height:23px;background:#e6e6e6;border:1px solid #d0d0d0"></div>
<div class="a" style="left:978.5px;top:94px;width:16px;height:21.5px;background:#fff;border:1px solid #d0d0d0;border-top:none"></div>
<div class="a" style="left:978.5px;top:115px;width:16px;height:21.5px;background:#fff;border:1px solid #d0d0d0;border-top:none"></div>
<svg style="left:983px;top:80px" width="8" height="5"><path d="M0 4H7L3.5 0.5Z" fill="#c0c0c0"/></svg>
<svg style="left:983px;top:102px" width="8" height="5"><path d="M0 0.5H7L3.5 4Z" fill="#555"/></svg>
<svg style="left:983px;top:121px" width="8" height="9"><rect x="0" y="0" width="7" height="1.2" fill="#555"/><path d="M0 3.5H7L3.5 7Z" fill="#555"/></svg>
<svg style="left:1030px;top:72.5px" width="34" height="30"><rect x="0.5" y="0.5" width="32" height="28.5" fill="#fff" stroke="#8a8a8a"/><rect x="0.5" y="0.5" width="32" height="3.5" fill="#7a7a7a"/><path d="M0.5 11H32.5M0.5 17H32.5M0.5 23H32.5M8.5 4V29M16.5 4V29M24.5 4V29" stroke="#b0b0b0" stroke-width="0.8"/><rect x="16.5" y="12" width="8" height="10" fill="#fbe4cc" stroke="#e8a060" stroke-width="0.9"/><path d="M8 22 C6 14 12 8 19 9" fill="none" stroke="#3d7bbd" stroke-width="2"/><path d="M17 5 L22 9 L17 12.5Z" fill="#3d7bbd"/><path d="M4 19 L8 25 L12 19Z" fill="#3d7bbd"/></svg>
<div class="rb" style="left:1010px;top:111px">Switch Row/</div>
<div class="rb" style="left:1024px;top:129px">Column</div>
<div class="rb" style="left:1057px;top:150px;font-size:12.5px;color:#666">Data</div>
<svg style="left:1094px;top:73.5px" width="40" height="34"><rect x="0.5" y="0.5" width="34" height="27" fill="#fff" stroke="#8a8a8a"/><rect x="0.5" y="0.5" width="34" height="4" fill="#7a7a7a"/><path d="M0.5 11H34M0.5 17H34M0.5 23H34M9 4V28M17 4V28M25 4V28" stroke="#e8a060" stroke-width="0.8"/><rect x="15.5" y="17" width="14" height="18" fill="#fff" stroke="#8a8a8a"/><path d="M19 33V26H21.5V33M23 33V22H25.5V33" fill="none" stroke="#8a8a8a" stroke-width="0.9"/></svg>
<div class="rb" style="left:1093px;top:111px">Select</div>
<div class="rb" style="left:1098px;top:129px">Data</div>
<div class="a" style="left:150px;top:179px;width:126px;height:29px;background:#fff;border:1px solid #c6c6c6"></div>
<div class="a" style="left:280px;top:179px;width:841px;height:29px;background:#fff;border:1px solid #c6c6c6;border-right:none"></div>
<svg style="left:168px;top:187px" width="12" height="12"><path d="M1 1L11 11M11 1L1 11" stroke="#bcbcbc" stroke-width="1.5"/></svg>
<svg style="left:207px;top:187px" width="14" height="12"><path d="M1 6L5 10.5L13 1" fill="none" stroke="#bcbcbc" stroke-width="1.8"/></svg>
<div class="a ser" style="left:249px;top:183px;font-size:15px;font-style:italic;font-weight:bold;color:#666;line-height:18px">f<span style="font-size:11px">x</span></div>
<div class="a" style="left:0;top:241px;width:1121px;height:479px;background:#fff"></div>
<div class="a" style="left:0;top:208px;width:28px;height:512px;background:#e6e6e6;border-right:1px solid #bdbdbd"></div>
<svg style="left:0;top:0" width="1121" height="720"><path d="M0 264.44H1121" stroke="#d9d9d9" stroke-width="1"/><path d="M0 287.88H1121" stroke="#d9d9d9" stroke-width="1"/><path d="M0 311.32H1121" stroke="#d9d9d9" stroke-width="1"/><path d="M0 334.76H1121" stroke="#d9d9d9" stroke-width="1"/><path d="M0 358.20H1121" stroke="#d9d9d9" stroke-width="1"/><path d="M0 381.64H1121" stroke="#d9d9d9" stroke-width="1"/><path d="M0 405.08H1121" stroke="#d9d9d9" stroke-width="1"/><path d="M0 428.52H1121" stroke="#d9d9d9" stroke-width="1"/><path d="M0 451.96H1121" stroke="#d9d9d9" stroke-width="1"/><path d="M0 475.40H1121" stroke="#d9d9d9" stroke-width="1"/><path d="M0 498.84H1121" stroke="#d9d9d9" stroke-width="1"/><path d="M0 522.28H1121" stroke="#d9d9d9" stroke-width="1"/><path d="M0 545.72H1121" stroke="#d9d9d9" stroke-width="1"/><path d="M0 568.05H1121" stroke="#d9d9d9" stroke-width="1"/><path d="M0 590.38H1121" stroke="#d9d9d9" stroke-width="1"/><path d="M0 612.71H1121" stroke="#d9d9d9" stroke-width="1"/><path d="M0 635.04H1121" stroke="#d9d9d9" stroke-width="1"/><path d="M0 657.37H1121" stroke="#d9d9d9" stroke-width="1"/><path d="M0 679.70H1121" stroke="#d9d9d9" stroke-width="1"/><path d="M0 702.03H1121" stroke="#d9d9d9" stroke-width="1"/><path d="M0 724.36H1121" stroke="#d9d9d9" stroke-width="1"/><path d="M179.00 241V720" stroke="#d9d9d9" stroke-width="1"/><path d="M179.00 218V241" stroke="#ababab" stroke-width="1"/><path d="M408.50 241V720" stroke="#d9d9d9" stroke-width="1"/><path d="M408.50 218V241" stroke="#ababab" stroke-width="1"/><path d="M480.05 241V720" stroke="#d9d9d9" stroke-width="1"/><path d="M480.05 218V241" stroke="#ababab" stroke-width="1"/><path d="M551.60 241V720" stroke="#d9d9d9" stroke-width="1"/><path d="M551.60 218V241" stroke="#ababab" stroke-width="1"/><path d="M623.15 241V720" stroke="#d9d9d9" stroke-width="1"/><path d="M623.15 218V241" stroke="#ababab" stroke-width="1"/><path d="M694.70 241V720" stroke="#d9d9d9" stroke-width="1"/><path d="M694.70 218V241" stroke="#ababab" stroke-width="1"/><path d="M766.25 241V720" stroke="#d9d9d9" stroke-width="1"/><path d="M766.25 218V241" stroke="#ababab" stroke-width="1"/><path d="M837.80 241V720" stroke="#d9d9d9" stroke-width="1"/><path d="M837.80 218V241" stroke="#ababab" stroke-width="1"/><path d="M909.35 241V720" stroke="#d9d9d9" stroke-width="1"/><path d="M909.35 218V241" stroke="#ababab" stroke-width="1"/><path d="M980.90 241V720" stroke="#d9d9d9" stroke-width="1"/><path d="M980.90 218V241" stroke="#ababab" stroke-width="1"/><path d="M1052.45 241V720" stroke="#d9d9d9" stroke-width="1"/><path d="M1052.45 218V241" stroke="#ababab" stroke-width="1"/><path d="M1124.00 241V720" stroke="#d9d9d9" stroke-width="1"/><path d="M1124.00 218V241" stroke="#ababab" stroke-width="1"/></svg>
<div class="a" style="left:0;top:240px;width:1121px;height:1px;background:#bdbdbd"></div>
<div class="ch" style="left:28.0px;width:151.0px">A</div>
<div class="ch" style="left:179.0px;width:229.5px">B</div>
<div class="ch" style="left:408.5px;width:71.6px">C</div>
<div class="ch" style="left:480.1px;width:71.6px">D</div>
<div class="ch" style="left:551.6px;width:71.5px">E</div>
<div class="ch" style="left:623.1px;width:71.6px">F</div>
<div class="ch" style="left:694.7px;width:71.5px">G</div>
<div class="ch" style="left:766.2px;width:71.5px">H</div>
<div class="ch" style="left:837.8px;width:71.5px">I</div>
<div class="ch" style="left:909.3px;width:71.6px">J</div>
<div class="ch" style="left:980.9px;width:71.5px">K</div>
<div class="ch" style="left:1052.4px;width:71.6px">L</div>
<div class="rn" style="top:242.0px;height:23.4px;line-height:25.4px">1</div>
<div class="rn" style="top:265.4px;height:23.4px;line-height:25.4px">2</div>
<div class="rn" style="top:288.9px;height:23.4px;line-height:25.4px">3</div>
<div class="rn" style="top:312.3px;height:23.4px;line-height:25.4px">4</div>
<div class="rn" style="top:335.8px;height:23.4px;line-height:25.4px">5</div>
<div class="rn" style="top:359.2px;height:23.4px;line-height:25.4px">6</div>
<div class="rn" style="top:382.6px;height:23.4px;line-height:25.4px">7</div>
<div class="rn" style="top:406.1px;height:23.4px;line-height:25.4px">8</div>
<div class="rn" style="top:429.5px;height:23.4px;line-height:25.4px">9</div>
<div class="rn" style="top:453.0px;height:23.4px;line-height:25.4px">10</div>
<div class="rn" style="top:476.4px;height:23.4px;line-height:25.4px">11</div>
<div class="rn" style="top:499.8px;height:23.4px;line-height:25.4px">12</div>
<div class="rn" style="top:523.3px;height:23.4px;line-height:25.4px">13</div>
<div class="rn" style="top:546.7px;height:22.3px;line-height:24.3px">14</div>
<div class="rn" style="top:569.1px;height:22.3px;line-height:24.3px">15</div>
<div class="rn" style="top:591.4px;height:22.3px;line-height:24.3px">16</div>
<div class="rn" style="top:613.7px;height:22.3px;line-height:24.3px">17</div>
<div class="rn" style="top:636.0px;height:22.3px;line-height:24.3px">18</div>
<div class="rn" style="top:658.4px;height:22.3px;line-height:24.3px">19</div>
<div class="rn" style="top:680.7px;height:22.3px;line-height:24.3px">20</div>
<div class="rn" style="top:703.0px;height:22.3px;line-height:24.3px">21</div>
<div class="a" style="left:29px;top:241px;width:150px;height:23.5px;background:#ffff00"></div>
<div class="a" style="left:179px;top:241px;width:230px;height:23.5px;background:#ede81c"></div>
<div class="a" style="left:29px;top:264.4px;width:150px;height:281.3px;background:#fbe9ea"></div>
<div class="a" style="left:180px;top:264.4px;width:229px;height:281.3px;background:#e9eef8"></div>
<div class="a" style="left:29px;top:263.4px;width:150px;height:1.5px;background:#8a3a30"></div>
<svg style="left:0;top:0" width="420" height="560"><path d="M29 287.88H178M180.5 287.88H407" stroke="#3c3c3c" stroke-width="1.5"/><path d="M29 311.32H178M180.5 311.32H407" stroke="#3c3c3c" stroke-width="1.5"/><path d="M29 334.76H178M180.5 334.76H407" stroke="#3c3c3c" stroke-width="1.5"/><path d="M29 358.20H178M180.5 358.20H407" stroke="#3c3c3c" stroke-width="1.5"/><path d="M29 381.64H178M180.5 381.64H407" stroke="#3c3c3c" stroke-width="1.5"/><path d="M29 405.08H178M180.5 405.08H407" stroke="#3c3c3c" stroke-width="1.5"/><path d="M29 428.52H178M180.5 428.52H407" stroke="#3c3c3c" stroke-width="1.5"/><path d="M29 451.96H178M180.5 451.96H407" stroke="#3c3c3c" stroke-width="1.5"/><path d="M29 475.40H178M180.5 475.40H407" stroke="#3c3c3c" stroke-width="1.5"/><path d="M29 498.84H178M180.5 498.84H407" stroke="#3c3c3c" stroke-width="1.5"/><path d="M29 522.28H178M180.5 522.28H407" stroke="#3c3c3c" stroke-width="1.5"/><path d="M29 545.72H178M180.5 545.72H407" stroke="#3c3c3c" stroke-width="1.5"/></svg>
<div class="a ser" style="left:179px;top:241px;width:230px;height:23.5px;text-align:center;font-weight:bold;font-size:17.5px;line-height:25px;color:#111">Doanh thu (VNĐ)</div>
<div class="a ser" style="left:32px;top:265.2px;height:23.4px;font-size:17.7px;line-height:25px;color:#1a1a1a;white-space:nowrap"><span style="letter-spacing:-0.75px">Tháng</span> 1</div>
<div class="a ser" style="left:180px;width:219.5px;top:265.2px;height:23.4px;font-size:17.7px;line-height:25px;color:#1a1a1a;text-align:right">389,450,000</div>
<div class="a ser" style="left:32px;top:288.7px;height:23.4px;font-size:17.7px;line-height:25px;color:#1a1a1a;white-space:nowrap"><span style="letter-spacing:-0.75px">Tháng</span> 2</div>
<div class="a ser" style="left:180px;width:219.5px;top:288.7px;height:23.4px;font-size:17.7px;line-height:25px;color:#1a1a1a;text-align:right">248,930,000</div>
<div class="a ser" style="left:32px;top:312.1px;height:23.4px;font-size:17.7px;line-height:25px;color:#1a1a1a;white-space:nowrap"><span style="letter-spacing:-0.75px">Tháng</span> 3</div>
<div class="a ser" style="left:180px;width:219.5px;top:312.1px;height:23.4px;font-size:17.7px;line-height:25px;color:#1a1a1a;text-align:right">458,760,000</div>
<div class="a ser" style="left:32px;top:335.6px;height:23.4px;font-size:17.7px;line-height:25px;color:#1a1a1a;white-space:nowrap"><span style="letter-spacing:-0.75px">Tháng</span> 4</div>
<div class="a ser" style="left:180px;width:219.5px;top:335.6px;height:23.4px;font-size:17.7px;line-height:25px;color:#1a1a1a;text-align:right">364,972,400</div>
<div class="a ser" style="left:32px;top:359.0px;height:23.4px;font-size:17.7px;line-height:25px;color:#1a1a1a;white-space:nowrap"><span style="letter-spacing:-0.75px">Tháng</span> 5</div>
<div class="a ser" style="left:180px;width:219.5px;top:359.0px;height:23.4px;font-size:17.7px;line-height:25px;color:#1a1a1a;text-align:right">128,450,000</div>
<div class="a ser" style="left:32px;top:382.4px;height:23.4px;font-size:17.7px;line-height:25px;color:#1a1a1a;white-space:nowrap"><span style="letter-spacing:-0.75px">Tháng</span> 6</div>
<div class="a ser" style="left:180px;width:219.5px;top:382.4px;height:23.4px;font-size:17.7px;line-height:25px;color:#1a1a1a;text-align:right">387,100,000</div>
<div class="a ser" style="left:32px;top:405.9px;height:23.4px;font-size:17.7px;line-height:25px;color:#1a1a1a;white-space:nowrap"><span style="letter-spacing:-0.75px">Tháng</span> 7</div>
<div class="a ser" style="left:180px;width:219.5px;top:405.9px;height:23.4px;font-size:17.7px;line-height:25px;color:#1a1a1a;text-align:right">348,750,000</div>
<div class="a ser" style="left:32px;top:429.3px;height:23.4px;font-size:17.7px;line-height:25px;color:#1a1a1a;white-space:nowrap"><span style="letter-spacing:-0.75px">Tháng</span> 8</div>
<div class="a ser" style="left:180px;width:219.5px;top:429.3px;height:23.4px;font-size:17.7px;line-height:25px;color:#1a1a1a;text-align:right">248,624,000</div>
<div class="a ser" style="left:32px;top:452.8px;height:23.4px;font-size:17.7px;line-height:25px;color:#1a1a1a;white-space:nowrap"><span style="letter-spacing:-0.75px">Tháng</span> 9</div>
<div class="a ser" style="left:180px;width:219.5px;top:452.8px;height:23.4px;font-size:17.7px;line-height:25px;color:#1a1a1a;text-align:right">254,792,000</div>
<div class="a ser" style="left:32px;top:476.2px;height:23.4px;font-size:17.7px;line-height:25px;color:#1a1a1a;white-space:nowrap"><span style="letter-spacing:-0.75px">Tháng</span> 10</div>
<div class="a ser" style="left:180px;width:219.5px;top:476.2px;height:23.4px;font-size:17.7px;line-height:25px;color:#1a1a1a;text-align:right">456,712,000</div>
<div class="a ser" style="left:32px;top:499.6px;height:23.4px;font-size:17.7px;line-height:25px;color:#1a1a1a;white-space:nowrap"><span style="letter-spacing:-0.75px">Tháng</span> 11</div>
<div class="a ser" style="left:180px;width:219.5px;top:499.6px;height:23.4px;font-size:17.7px;line-height:25px;color:#1a1a1a;text-align:right">589,743,000</div>
<div class="a ser" style="left:32px;top:523.1px;height:23.4px;font-size:17.7px;line-height:25px;color:#1a1a1a;white-space:nowrap"><span style="letter-spacing:-0.75px">Tháng</span> 12</div>
<div class="a ser" style="left:180px;width:219.5px;top:523.1px;height:23.4px;font-size:17.7px;line-height:25px;color:#1a1a1a;text-align:right">369,751,000</div>
<div class="a" style="left:178.5px;top:264.4px;width:1.8px;height:281.3px;background:#b0424a"></div>
<div class="a" style="left:29px;top:544.7px;width:150px;height:2px;background:#b8414a"></div>
<div class="a" style="left:408px;top:264.4px;width:2px;height:281.3px;background:#4a6fc0"></div>
<div class="a" style="left:180px;top:544.7px;width:229px;height:2px;background:#4a6fc0"></div>
<div class="a" style="left:180px;top:263.4px;width:228px;height:2px;background:#8064b8"></div>
<div class="a" style="left:408px;top:242px;width:1.8px;height:23px;background:#8064b8"></div>
<div class="a" style="left:179px;top:242px;width:1.5px;height:23px;background:#8064b8"></div>
<div class="a" style="left:176.5px;top:239.5px;width:5px;height:5px;background:#8064b8"></div>
<div class="a" style="left:406.5px;top:239.5px;width:5px;height:5px;background:#8064b8"></div>
<div class="a" style="left:406.5px;top:262.5px;width:5px;height:5px;background:#8064b8"></div>
<div class="a" style="left:176.5px;top:262.5px;width:5px;height:5px;background:#b8414a"></div>
<div class="a" style="left:26.5px;top:543.5px;width:5px;height:5px;background:#b8414a"></div>
<div class="a" style="left:176.5px;top:543.5px;width:5px;height:5px;background:#b8414a"></div>
<div class="a" style="left:406.5px;top:543.5px;width:5px;height:5px;background:#4a6fc0"></div>
<div class="a" style="left:416.5px;top:247.5px;width:631.0px;height:427.0px;background:#fff;border:2px solid #a3a3a3"></div>
<div class="a" style="left:400px;width:95px;top:297.0px;font-size:11.8px;color:#595959;line-height:12px;text-align:right">700,000,000</div>
<div class="a" style="left:511.5px;top:342.5px;width:518.5px;height:1px;background:#d9d9d9"></div>
<div class="a" style="left:400px;width:95px;top:337.0px;font-size:11.8px;color:#595959;line-height:12px;text-align:right">600,000,000</div>
<div class="a" style="left:511.5px;top:382.4px;width:518.5px;height:1px;background:#d9d9d9"></div>
<div class="a" style="left:400px;width:95px;top:376.9px;font-size:11.8px;color:#595959;line-height:12px;text-align:right">500,000,000</div>
<div class="a" style="left:511.5px;top:422.4px;width:518.5px;height:1px;background:#d9d9d9"></div>
<div class="a" style="left:400px;width:95px;top:416.9px;font-size:11.8px;color:#595959;line-height:12px;text-align:right">400,000,000</div>
<div class="a" style="left:511.5px;top:462.4px;width:518.5px;height:1px;background:#d9d9d9"></div>
<div class="a" style="left:400px;width:95px;top:456.9px;font-size:11.8px;color:#595959;line-height:12px;text-align:right">300,000,000</div>
<div class="a" style="left:511.5px;top:502.3px;width:518.5px;height:1px;background:#d9d9d9"></div>
<div class="a" style="left:400px;width:95px;top:496.8px;font-size:11.8px;color:#595959;line-height:12px;text-align:right">200,000,000</div>
<div class="a" style="left:511.5px;top:542.3px;width:518.5px;height:1px;background:#d9d9d9"></div>
<div class="a" style="left:400px;width:95px;top:536.8px;font-size:11.8px;color:#595959;line-height:12px;text-align:right">100,000,000</div>
<div class="a" style="left:400px;width:89px;top:576.8px;font-size:11.8px;color:#595959;line-height:12px;text-align:right">-</div>
<div class="a" style="left:545.6px;top:427.1px;width:30px;height:155.6px;background:#5b9bd5"></div>
<div class="a" style="left:583.9px;top:483.3px;width:30px;height:99.5px;background:#ed7d31"></div>
<div class="a" style="left:622.2px;top:399.4px;width:30px;height:183.3px;background:#a5a5a5"></div>
<div class="a" style="left:660.5px;top:436.9px;width:30px;height:145.9px;background:#ffc000"></div>
<div class="a" style="left:698.8px;top:531.4px;width:30px;height:51.3px;background:#4472c4"></div>
<div class="a" style="left:737.1px;top:428.0px;width:30px;height:154.7px;background:#70ad47"></div>
<div class="a" style="left:775.4px;top:443.4px;width:30px;height:139.4px;background:#255e91"></div>
<div class="a" style="left:813.7px;top:483.4px;width:30px;height:99.4px;background:#9e480e"></div>
<div class="a" style="left:852.0px;top:480.9px;width:30px;height:101.8px;background:#636363"></div>
<div class="a" style="left:890.3px;top:400.2px;width:30px;height:182.5px;background:#997300"></div>
<div class="a" style="left:928.6px;top:347.1px;width:30px;height:235.7px;background:#264478"></div>
<div class="a" style="left:966.9px;top:435.0px;width:30px;height:147.8px;background:#43682b"></div>
<div class="a" style="left:510.7px;top:303px;width:1.6px;height:279.75px;background:#8f8f8f"></div>
<div class="a" style="left:1029.2px;top:303px;width:1.6px;height:279.75px;background:#8f8f8f"></div>
<div class="a" style="left:511.5px;top:302.2px;width:518.5px;height:1.6px;background:#8f8f8f"></div>
<div class="a" style="left:511.5px;top:582.0px;width:518.5px;height:1.6px;background:#8f8f8f"></div>
<div class="a" style="left:417.5px;width:627.0px;top:263px;text-align:center;font-size:18.4px;font-weight:bold;color:#595959;line-height:20px">Doanh thu năm 2024</div>
<div class="a" style="left:511.5px;width:518.5px;top:592px;text-align:center;font-size:12.2px;color:#595959;line-height:14px">Doanh thu (VNĐ)</div>
<div class="lg" style="left:542px;top:622px"><i style="background:#5b9bd5"></i>Tháng 1</div>
<div class="lg" style="left:606px;top:622px"><i style="background:#ed7d31"></i>Tháng 2</div>
<div class="lg" style="left:672px;top:622px"><i style="background:#a5a5a5"></i>Tháng 3</div>
<div class="lg" style="left:736px;top:622px"><i style="background:#ffc000"></i>Tháng 4</div>
<div class="lg" style="left:800px;top:622px"><i style="background:#4472c4"></i>Tháng 5</div>
<div class="lg" style="left:865px;top:622px"><i style="background:#70ad47"></i>Tháng 6</div>
<div class="lg" style="left:542px;top:647px"><i style="background:#255e91"></i>Tháng 7</div>
<div class="lg" style="left:606px;top:647px"><i style="background:#9e480e"></i>Tháng 8</div>
<div class="lg" style="left:672px;top:647px"><i style="background:#636363"></i>Tháng 9</div>
<div class="lg" style="left:736px;top:647px"><i style="background:#997300"></i>Tháng 10</div>
<div class="lg" style="left:800px;top:647px"><i style="background:#264478"></i>Tháng 11</div>
<div class="lg" style="left:865px;top:647px"><i style="background:#43682b"></i>Tháng 12</div>
<div class="hd" style="left:411.25px;top:242.25px"></div>
<div class="hd" style="left:725.25px;top:242.25px"></div>
<div class="hd" style="left:1040.25px;top:242.25px"></div>
<div class="hd" style="left:411.25px;top:454.75px"></div>
<div class="hd" style="left:1040.25px;top:454.75px"></div>
<div class="hd" style="left:411.25px;top:667.25px"></div>
<div class="hd" style="left:725.25px;top:667.25px"></div>
<div class="hd" style="left:1040.25px;top:667.25px"></div>
<div class="hd" style="left:505.25px;top:296.8px"></div>
<div class="hd" style="left:764.25px;top:296.8px"></div>
<div class="hd" style="left:1023.75px;top:296.8px"></div>
<div class="hd" style="left:505.25px;top:436.6px"></div>
<div class="hd" style="left:1023.75px;top:436.6px"></div>
<div class="hd" style="left:505.25px;top:576.5px"></div>
<div class="hd" style="left:764.25px;top:576.5px"></div>
<div class="hd" style="left:1023.75px;top:576.5px"></div>
<div class="a" style="left:1061px;top:247px;width:31px;height:31px;background:#fff;border:1px solid #b5b5b5"></div>
<div class="a" style="left:1061px;top:290px;width:31px;height:31px;background:#fff;border:1px solid #b5b5b5"></div>
<div class="a" style="left:1061px;top:333px;width:31px;height:31px;background:#fff;border:1px solid #b5b5b5"></div>
<svg style="left:1066px;top:252px" width="20" height="20"><path d="M7.6 3.5h4.8v4.6h4.6v4.8h-4.6v4.6h-4.8v-4.6h-4.6v-4.8h4.6z" fill="#5c9f87"/></svg>
<svg style="left:1062px;top:292px" width="28" height="28"><path d="M24 6 L16.5 14.5" stroke="#5a5a5a" stroke-width="3.2" stroke-linecap="round"/><path d="M16.5 13 L19 15.5 L16 18.5 L13.5 16Z" fill="#e8e8e8" stroke="#888" stroke-width="0.6"/><path d="M13.5 16.2 C9.5 15.5 7.5 19.5 5 23.5 C9.5 23.5 15 22 15.8 18.5Z" fill="#4a7fb9"/><path d="M8 21.5 C10 20 11.5 19 13 18.8" stroke="#cfe0f0" stroke-width="0.9" fill="none"/></svg>
<svg style="left:1064px;top:336px" width="24" height="24"><path d="M2.5 3.5H21.5L14 12V21.5L10 19.5V12Z" fill="#6a6a6a" stroke="#9a9a9a" stroke-width="0.8"/><path d="M6 5H18L12.8 10.8H11.2Z" fill="#777"/></svg>
<div class="a" style="left:10px;top:145px;width:144px;height:300px;background:#fff;border:1px solid #c6c6c6"></div>
<div class="a" style="left:7.5px;top:130.5px;width:152px;height:316px;border:3px solid #d5393e"></div>
<div class="mi" style="top:152.5px;color:#5f5f5f">A<u>x</u>es</div>
<div class="ar" style="top:155.0px;border-left-color:#555"></div>
<div class="mi" style="top:179.2px;color:#5f5f5f"><u>A</u>xis Titles</div>
<div class="ar" style="top:181.8px;border-left-color:#555"></div>
<div class="mi" style="top:206.0px;color:#5f5f5f"><u>C</u>hart Title</div>
<div class="ar" style="top:208.5px;border-left-color:#555"></div>
<div class="mi" style="top:232.8px;color:#5f5f5f"><u>D</u>ata Labels</div>
<div class="ar" style="top:235.2px;border-left-color:#555"></div>
<div class="mi" style="top:259.5px;color:#5f5f5f">Data Ta<u>b</u>le</div>
<div class="ar" style="top:262.0px;border-left-color:#555"></div>
<div class="mi" style="top:286.2px;color:#5f5f5f"><u>E</u>rror Bars</div>
<div class="ar" style="top:288.8px;border-left-color:#555"></div>
<div class="mi" style="top:313.0px;color:#5f5f5f"><u>G</u>ridlines</div>
<div class="ar" style="top:315.5px;border-left-color:#555"></div>
<div class="mi" style="top:339.8px;color:#5f5f5f"><u>L</u>egend</div>
<div class="ar" style="top:342.2px;border-left-color:#555"></div>
<div class="mi" style="top:366.5px;color:#b5b5b5">L<u>i</u>nes</div>
<div class="ar" style="top:369.0px;border-left-color:#c0c0c0"></div>
<div class="mi" style="top:393.2px;color:#5f5f5f"><u>T</u>rendline</div>
<div class="ar" style="top:395.8px;border-left-color:#555"></div>
<div class="mi" style="top:420.0px;color:#b5b5b5"><u>U</u>p/Down Bars</div>
<div class="ar" style="top:422.5px;border-left-color:#c0c0c0"></div>
<svg style="left:0;top:0" width="40" height="450"><path d="M13 153V167.5H29" fill="none" stroke="#e8a050" stroke-width="1" stroke-dasharray="1.2 0.8"/><rect x="16.0" y="157.6" width="3.6" height="8.9" fill="#d8d8d8" stroke="#7a7a7a" stroke-width="1"/><rect x="19.8" y="153.5" width="3.6" height="13.0" fill="#d8d8d8" stroke="#7a7a7a" stroke-width="1"/><rect x="23.7" y="158.9" width="3.6" height="7.6" fill="#d8d8d8" stroke="#7a7a7a" stroke-width="1"/><rect x="12.5" y="180" width="2" height="10" fill="#e8a050"/><rect x="16" y="192.3" width="11" height="1.8" fill="#e8a050"/><rect x="16.0" y="183.5" width="3.6" height="6.5" fill="#d8d8d8" stroke="#7a7a7a" stroke-width="1"/><rect x="19.8" y="180.5" width="3.6" height="9.5" fill="#d8d8d8" stroke="#7a7a7a" stroke-width="1"/><rect x="23.7" y="184.5" width="3.6" height="5.5" fill="#d8d8d8" stroke="#7a7a7a" stroke-width="1"/><rect x="15" y="205.8" width="11" height="1.8" fill="#e8a050"/><rect x="15.5" y="213.3" width="3.6" height="7.2" fill="#d8d8d8" stroke="#7a7a7a" stroke-width="1"/><rect x="19.3" y="210.0" width="3.6" height="10.5" fill="#d8d8d8" stroke="#7a7a7a" stroke-width="1"/><rect x="23.2" y="214.4" width="3.6" height="6.1" fill="#d8d8d8" stroke="#7a7a7a" stroke-width="1"/><rect x="15.5" y="240.0" width="3.6" height="6.5" fill="#d8d8d8" stroke="#7a7a7a" stroke-width="1"/><rect x="19.3" y="237.0" width="3.6" height="9.5" fill="#d8d8d8" stroke="#7a7a7a" stroke-width="1"/><rect x="23.2" y="241.0" width="3.6" height="5.5" fill="#d8d8d8" stroke="#7a7a7a" stroke-width="1"/><rect x="15.8" y="235" width="1.5" height="1.5" fill="#888"/><rect x="20" y="232.5" width="1.5" height="1.5" fill="#888"/><rect x="24" y="236" width="1.5" height="1.5" fill="#888"/><path d="M13 260V273" stroke="#888" stroke-width="1"/><rect x="14.5" y="263.5" width="4.1" height="6.5" fill="#d8d8d8" stroke="#7a7a7a" stroke-width="1"/><rect x="18.8" y="260.5" width="4.1" height="9.5" fill="#d8d8d8" stroke="#7a7a7a" stroke-width="1"/><rect x="23.2" y="264.5" width="4.1" height="5.5" fill="#d8d8d8" stroke="#7a7a7a" stroke-width="1"/><rect x="13.5" y="268.5" width="14.5" height="6" fill="#fbe2c6" stroke="#e8a050" stroke-width="1"/><path d="M13.5 271.5H28M20.5 268.5V274.5" stroke="#e8a050" stroke-width="0.8"/><rect x="15.5" y="293.9" width="3.6" height="6.1" fill="#d8d8d8" stroke="#7a7a7a" stroke-width="1"/><rect x="19.3" y="291.0" width="3.6" height="9.0" fill="#d8d8d8" stroke="#7a7a7a" stroke-width="1"/><rect x="23.2" y="294.8" width="3.6" height="5.2" fill="#d8d8d8" stroke="#7a7a7a" stroke-width="1"/><path d="M16.8 287V291M20.8 286.5V290M24.8 288V292" stroke="#888" stroke-width="0.8"/><path d="M14 315.5H27M14 318.5H27M14 321.5H27M17 314V326M21 314V326M25 314V326" stroke="#e8a050" stroke-width="0.8" opacity="0.8"/><rect x="15.0" y="320.0" width="3.8" height="6.5" fill="#d8d8d8" stroke="#7a7a7a" stroke-width="1"/><rect x="19.0" y="317.0" width="3.8" height="9.5" fill="#d8d8d8" stroke="#7a7a7a" stroke-width="1"/><rect x="23.0" y="321.0" width="3.8" height="5.5" fill="#d8d8d8" stroke="#7a7a7a" stroke-width="1"/><rect x="12.0" y="350.0" width="3.6" height="6.5" fill="#d8d8d8" stroke="#7a7a7a" stroke-width="1"/><rect x="15.8" y="347.0" width="3.6" height="9.5" fill="#d8d8d8" stroke="#7a7a7a" stroke-width="1"/><rect x="19.7" y="351.0" width="3.6" height="5.5" fill="#d8d8d8" stroke="#7a7a7a" stroke-width="1"/><rect x="20.5" y="339.5" width="8" height="9" fill="#fbe2c6" stroke="#a08060" stroke-width="1"/><path d="M22 342.5H27M22 345H27M24.5 341V347" stroke="#e8a050" stroke-width="0.7"/><path d="M11.5 366V382.5H28" fill="none" stroke="#cfcfcf" stroke-width="1"/><path d="M13 381V372L17 370L21 373L26 368V381M17 370V381M21 373V381" fill="none" stroke="#cfcfcf" stroke-width="1"/><path d="M11.5 394V408H28" fill="none" stroke="#707070" stroke-width="1.2"/><path d="M13 405C19 405 24 401 26.5 394" fill="none" stroke="#d8c090" stroke-width="1.2"/><rect x="16" y="405" width="1.5" height="1.5" fill="#555"/><rect x="17.5" y="401" width="1.3" height="1.3" fill="#888"/><rect x="23" y="397" width="1.3" height="1.3" fill="#888"/><rect x="27" y="394" width="1.3" height="1.3" fill="#888"/><rect x="14.5" y="399.5" width="1.3" height="1.3" fill="#aaa"/><path d="M12.5 421V434.5M11.5 435.5H28" fill="none" stroke="#c8cdd8" stroke-width="1"/><ellipse cx="18.5" cy="428.5" rx="2.6" ry="3.6" fill="none" stroke="#c4c4c4" stroke-width="1.1"/><path d="M18.5 424V433M26.5 424.5V432.5L22 428.5Z" fill="none" stroke="#c4c4c4" stroke-width="1.1"/></svg>
</div></body></html>
